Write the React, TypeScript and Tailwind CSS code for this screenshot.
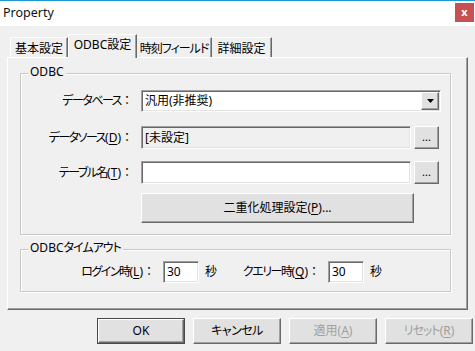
import React from "react";

const raised =
  "border border-t-white border-l-white border-r-[#696969] border-b-[#696969] shadow-[inset_-1px_-1px_0_#a0a0a0,inset_1px_1px_0_#e3e3e3] bg-[#e1e1e1]";
const sunken =
  "border border-t-[#a0a0a0] border-l-[#a0a0a0] border-r-white border-b-white shadow-[inset_1px_1px_0_#696969,inset_-1px_-1px_0_#e3e3e3]";

function Label({ text, u, w }: { text: string; u?: string; w: number }) {
  return (
    <div className="flex items-center justify-end pr-[8px] shrink-0 whitespace-nowrap" style={{ width: w }}>
      <span>
        <span className="tracking-[-1.5px]">{text}</span>
        {u !== undefined && (
          <>
            (<span className="underline underline-offset-2">{u}</span>)
          </>
        )}
      </span>
      <span className="inline-block w-[12px] text-center [font-feature-settings:normal]">：</span>
    </div>
  );
}

function Dots() {
  return (
    <div className={`${raised} w-[25px] h-[23px] flex items-center justify-center ml-[3px] shrink-0 text-[11px] leading-none pb-[2px]`}>
      ...
    </div>
  );
}

const tabBase =
  "h-[20px] border-t border-t-white border-r border-r-[#696969] shadow-[inset_-1px_0_0_#a0a0a0] flex items-center justify-center pt-[2px] whitespace-nowrap";

export default function App() {
  return (
    <div className="w-[475px] h-[351px] bg-[#f0f0f0] text-[12px] leading-none text-black font-['Noto_Sans','Noto_Sans_CJK_JP',sans-serif] [font-feature-settings:'palt'] overflow-hidden select-none">
      {/* Title bar */}
      <div className="h-[26px] bg-white border-t border-t-[#1c9ad6] flex">
        <div className="pl-[3px] pt-[6px] text-[12.5px] text-[#111]">Property</div>
        <div className="ml-auto mr-[1px] mt-[2px] w-[19px] h-[19px] bg-[#c75050] text-white font-bold text-[11px] flex items-center justify-center pb-[2px]">
          x
        </div>
      </div>

      {/* Tabs */}
      <div className="flex items-end h-[31px] pl-[10px] relative z-10">
        <div className={`${tabBase} w-[58px] border-l border-l-white`}>基本設定</div>
        <div className="w-[69px] h-[24px] -mb-[1px] bg-[#f0f0f0] border-t border-l border-t-white border-l-white border-r border-r-[#696969] shadow-[inset_-1px_0_0_#a0a0a0] flex items-center justify-center pb-[3px]">
          ODBC設定
        </div>
        <div className={`${tabBase} w-[75px]`}>
          <span className="tracking-[-1px]">時刻フィールド</span>
        </div>
        <div className={`${tabBase} w-[60px]`}>詳細設定</div>
      </div>

      {/* Panel */}
      <div className="ml-[7px] w-[461px] h-[253px] border border-t-white border-l-white border-r-[#696969] border-b-[#696969] shadow-[inset_-1px_-1px_0_#a0a0a0] pt-[15px] pl-[12px]">
        {/* ODBC group */}
        <div className="relative w-[431px] h-[162px] border border-[#c8c8c8] shadow-[inset_1px_1px_0_#fff,1px_1px_0_#fff]">
          <span className="absolute left-[7px] -top-[8px] px-[2px] bg-[#f0f0f0]">ODBC</span>
          <div className="pt-[16px]">
            <div className="flex h-[22px]">
              <Label text="データベース" w={120} />
              <div className={`${sunken} bg-white w-[300px] h-[22px] flex items-center pl-[3px] relative`}>
                <span>汎用(非推奨)</span>
                <div className={`${raised} absolute right-[1px] top-[1px] w-[18px] h-[18px] flex items-center justify-center`}>
                  <svg width="7" height="4" viewBox="0 0 7 4">
                    <path d="M0 0h7L3.5 4z" fill="#000" />
                  </svg>
                </div>
              </div>
            </div>
            <div className="flex h-[23px] mt-[14px]">
              <Label text="データソース" u="D" w={120} />
              <div className={`${sunken} bg-[#f0f0f0] w-[270px] h-[23px] flex items-center pl-[3px]`}>[未設定]</div>
              <Dots />
            </div>
            <div className="flex h-[23px] mt-[12px]">
              <Label text="テーブル名" u="T" w={120} />
              <div className={`${sunken} bg-white w-[270px] h-[23px]`} />
              <Dots />
            </div>
            <div className="flex mt-[9px]">
              <div className="w-[120px] shrink-0" />
              <div className={`${raised} w-[273px] h-[30px] flex items-center justify-center`}>
                <span>
                  二重化処理設定(<span className="underline underline-offset-2">P</span>)...
                </span>
              </div>
            </div>
          </div>
        </div>

        {/* Timeout group */}
        <div className="relative mt-[14px] w-[431px] h-[43px] border border-[#c8c8c8] shadow-[inset_1px_1px_0_#fff,1px_1px_0_#fff]">
          <span className="absolute left-[7px] -top-[8px] px-[2px] bg-[#f0f0f0] whitespace-nowrap">
            ODBC<span className="tracking-[-1px]">タイムアウト</span>
          </span>
          <div className="flex items-center mt-[11px] h-[22px]">
            <Label text="ログイン時" u="L" w={142} />
            <div className={`${sunken} bg-white w-[36px] h-[22px] flex items-center pl-[3px]`}>30</div>
            <span className="ml-[6px] w-[12px]">秒</span>
            <Label text="クエリー時" u="Q" w={111} />
            <div className={`${sunken} bg-white w-[36px] h-[22px] flex items-center pl-[3px]`}>30</div>
            <span className="ml-[6px]">秒</span>
          </div>
        </div>
      </div>

      {/* Bottom buttons */}
      <div className="flex mt-[8px] ml-[97px] gap-[8px]">
        <div className="w-[88px] h-[26px] border border-[#4a4a4a] flex">
          <div className={`${raised} flex-1 flex items-center justify-center`}>OK</div>
        </div>
        <div className={`${raised} w-[88px] h-[26px] flex items-center justify-center`}>
          <span className="tracking-[-0.5px]">キャンセル</span>
        </div>
        <div className={`${raised} w-[88px] h-[26px] flex items-center justify-center text-[#a0a0a0]`}>
          <span>
            適用(<span className="underline underline-offset-2">A</span>)
          </span>
        </div>
        <div className={`${raised} w-[88px] h-[26px] flex items-center justify-center text-[#a0a0a0]`}>
          <span>
            <span className="tracking-[-1px]">リセット</span>(<span className="underline underline-offset-2">R</span>)
          </span>
        </div>
      </div>
    </div>
  );
}
